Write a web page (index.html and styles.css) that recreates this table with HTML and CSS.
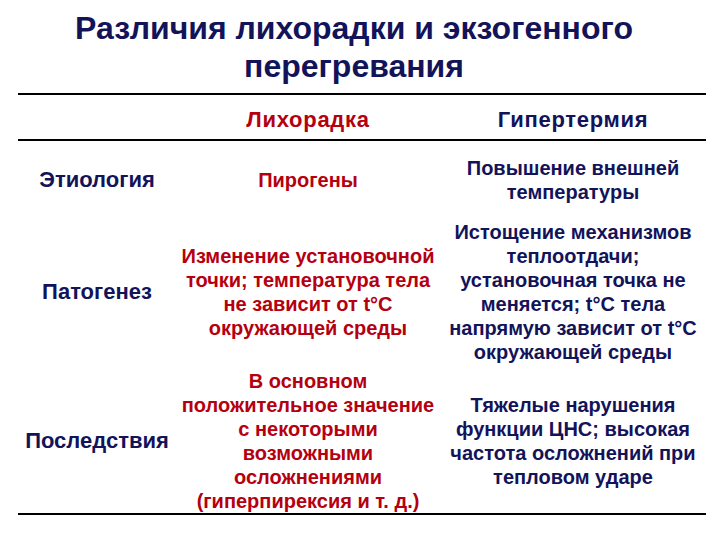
FILE: index.html
```html
<!DOCTYPE html>
<html lang="ru">
<head>
<meta charset="utf-8">
<title>Различия лихорадки и экзогенного перегревания</title>
<link rel="stylesheet" href="styles.css">
</head>
<body>
<div class="slide">
  <h1 class="title">Различия лихорадки и экзогенного<br>перегревания</h1>
  <div class="table">
    <div class="cell head"></div>
    <div class="cell head red">Лихорадка</div>
    <div class="cell head navy">Гипертермия</div>

    <div class="cell label">Этиология</div>
    <div class="cell red">Пирогены</div>
    <div class="cell navy">Повышение внешней<br>температуры</div>

    <div class="cell label">Патогенез</div>
    <div class="cell red">Изменение установочной<br>точки; температура тела<br>не зависит от t°C<br>окружающей среды</div>
    <div class="cell navy">Истощение механизмов<br>теплоотдачи;<br>установочная точка не<br>меняется; t°C тела<br>напрямую зависит от t°C<br>окружающей среды</div>

    <div class="cell label last">Последствия</div>
    <div class="cell red last">В основном<br>положительное значение<br>с некоторыми<br>возможными<br>осложнениями<br>(гиперпирексия и т. д.)</div>
    <div class="cell navy last">Тяжелые нарушения<br>функции ЦНС; высокая<br>частота осложнений при<br>тепловом ударе</div>
  </div>
</div>
</body>
</html>
```
FILE: styles.css
```css
html, body {
  margin: 0;
  padding: 0;
  background: #ffffff;
}
body {
  font-family: "Liberation Sans", Arial, sans-serif;
  font-weight: bold;
}
.slide {
  width: 720px;
  height: 540px;
  box-sizing: border-box;
  padding: 0 14px 0 18px;
}
.title {
  margin: 0;
  padding: 9px 16px 0 0;
  height: 84px;
  box-sizing: border-box;
  font-size: 32px;
  line-height: 38px;
  text-align: center;
  color: #13135a;
  font-weight: bold;
}
.table {
  display: grid;
  grid-template-columns: 158px 264px 266px;
  grid-template-rows: 46px 76px 148px 148px;
  border-top: 2px solid #000;
  border-bottom: 2px solid #000;
  margin-top: 9px;
}
.cell {
  display: flex;
  align-items: center;
  justify-content: center;
  text-align: center;
  font-size: 20px;
  line-height: 24px;
  padding-top: 1px;
}
.cell.last {
  padding-top: 3px;
}
.head {
  font-size: 22px;
  letter-spacing: 0.7px;
  border-bottom: 2px solid #000;
  padding-top: 6px;
}
.label {
  font-size: 22px;
  color: #13135a;
}
.red {
  color: #b5000f;
}
.navy {
  color: #13135a;
}
```
